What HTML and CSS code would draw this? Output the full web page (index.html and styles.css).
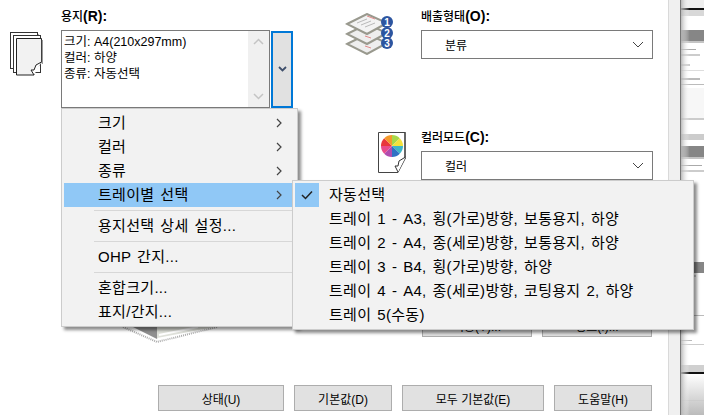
FILE: index.html
```html
<!DOCTYPE html>
<html lang="ko">
<head>
    <meta charset="UTF-8">
    <title>인쇄 설정 - 용지</title>
    <link rel="stylesheet" href="styles.css">
</head>
<body>
    <div class="page">
        <div class="sheet">
            <div class="columns">
                <div class="paper-col">
                    <svg class="paper-icon" width="33" height="44" viewBox="0 0 33 44">
                        <path d="M28 2V36" stroke="#aaa" stroke-width="2"/>
                        <rect x="0.5" y="0.5" width="27" height="36" fill="#fff" stroke="#333"/>
                        <rect x="3.5" y="3.500" width="27" height="37" fill="#fff" stroke="#333"/>
                        <path d="M6.5 6.5H31.500V30L24 40V43H6.500Z" fill="#f2f2f2" stroke="#222"/>
                        <path d="M31.500 30L26 33L24 38L21 38L24 43" fill="#fff" stroke="#222"/>
                        <path d="M32.500 8V32" stroke="#999" stroke-width="1.500"/>
                    </svg>
                    <div class="paper-field">
                        <div class="field-label">용지<b>(R):</b></div>
                        <div class="paper-row">
                            <div class="listbox">
                                <div class="listbox-text">
                                    <div>크기: A4(210x297mm)</div>
                                    <div>컬러: 하양</div>
                                    <div>종류: 자동선택</div>
                                </div>
                                <div class="scrollbar">
                                    <svg width="11" height="7" viewBox="0 0 11 7"><path d="M1 6L5.500 1.500L10 6" class="scroll-arrow"/></svg>
                                    <svg width="11" height="7" viewBox="0 0 11 7"><path d="M1 1L5.500 5.500L10 1" class="scroll-arrow"/></svg>
                                </div>
                            </div>
                            <button class="drop-btn">
                                <svg width="9" height="6" viewBox="0 0 9 6"><path d="M1 1L4.500 4.500L8 1" fill="none" stroke="#3f4f6b" stroke-width="1.800"/></svg>
                            </button>
                        </div>
                        <svg class="page-preview" width="100" height="75" viewBox="0 0 100 75">
                            <path d="M3 59L37 74L97 59" fill="none" stroke="#aaa" stroke-width="2" stroke-dasharray="1 1"/>
                            <path d="M13 59L37 71L40 59Z" fill="#8f8f8f"/>
                            <path d="M37 59H95L37 70Z" fill="#dfe1da"/>
                            <path d="M39 67L78 59" stroke="#fff" stroke-width="2"/>
                        </svg>
                    </div>
                </div>
                <div class="output-col">
                    <div class="setting">
                        <svg class="stack-icon" width="50" height="42" viewBox="0 0 50 42">
                            <path d="M2 31L22 21L42 30L22 41Z" fill="#eee" stroke="#99998e" stroke-width="2"/>
                            <path d="M2 21L22 11L42 20L22 31Z" fill="#eee" stroke="#99998e" stroke-width="2"/>
                            <path d="M2 11L22 1L42 10L22 21Z" fill="#f3f3f3" stroke="#99998e" stroke-width="2"/>
                            <path d="M12 10L22 6M16 12L26 8M20 14L30 10" stroke="#b9b9b9"/>
                            <path d="M22 3L30 6M20 23L26 25M20 33L26 35" stroke="#e08a8a"/>
                            <circle cx="42" cy="9" r="6" fill="#2c55a0"/>
                            <circle cx="42" cy="20" r="6" fill="#2c55a0"/>
                            <circle cx="42" cy="30" r="6" fill="#2c55a0"/>
                            <text x="42" y="12.500" class="stack-num">1</text>
                            <text x="42" y="23.500" class="stack-num">2</text>
                            <text x="42" y="33.500" class="stack-num">3</text>
                        </svg>
                        <div class="setting-field">
                            <div class="field-label">배출형태<b>(O):</b></div>
                            <div class="select">
                                <span>분류</span>
                                <svg width="12" height="7" viewBox="0 0 12 7"><path d="M1 1L6 6L11 1" fill="none" stroke="#444"/></svg>
                            </div>
                        </div>
                    </div>
                    <div class="setting setting-color">
                        <svg class="color-icon" width="29" height="41" viewBox="0 0 29 41">
                            <path d="M0.500 0.500H27.500V26L20 40.500H0.500Z" fill="#fff" stroke="#444"/>
                            <path d="M27 1V27" stroke="#666" stroke-width="2"/>
                            <path d="M27.500 25L21 29L20 34L17 34L20 40" fill="#fff" stroke="#333"/>
                            <path d="M14 14L14 3A11 11 0 0 1 21.800 6.200Z" fill="#a8d84a"/>
                            <path d="M14 14L21.800 6.200A11 11 0 0 1 25 14Z" fill="#f4e23c"/>
                            <path d="M14 14H25A11 11 0 0 1 21.800 21.800Z" fill="#3fb6c8"/>
                            <path d="M14 14L21.800 21.800A11 11 0 0 1 14 25Z" fill="#2f72c4"/>
                            <path d="M14 14V25A11 11 0 0 1 6.200 21.800Z" fill="#b04cb0"/>
                            <path d="M14 14L6.200 21.800A11 11 0 0 1 3 14Z" fill="#e84c8c"/>
                            <path d="M14 14H3A11 11 0 0 1 6.200 6.200Z" fill="#e8383c"/>
                            <path d="M14 14L6.200 6.200A11 11 0 0 1 14 3Z" fill="#f49a2c"/>
                        </svg>
                        <div class="setting-field">
                            <div class="field-label">컬러모드<b>(C):</b></div>
                            <div class="select">
                                <span>컬러</span>
                                <svg width="12" height="7" viewBox="0 0 12 7"><path d="M1 1L6 6L11 1" fill="none" stroke="#444"/></svg>
                            </div>
                        </div>
                    </div>
                    <div class="under-btns">
                        <button class="btn under-btn">기능(Y)...</button>
                        <button class="btn under-btn">정보(I)...</button>
                    </div>
                </div>
            </div>
            <div class="footer-btns">
                <button class="btn btn-status">상태(U)</button>
                <button class="btn btn-default">기본값(D)</button>
                <button class="btn btn-all">모두 기본값(E)</button>
                <button class="btn btn-default">도움말(H)</button>
            </div>
        </div>
        <div class="gutter"></div>
        <svg class="preview" width="24" height="415" viewBox="0 0 24 415">
            <defs>
                <linearGradient id="edge" x1="0" x2="1" y1="0" y2="0">
                    <stop offset="0" stop-color="#aaa"/>
                    <stop offset="0.4" stop-color="#fff" stop-opacity="0"/>
                </linearGradient>
                <linearGradient id="foot" x1="0" x2="0" y1="0" y2="1">
                    <stop offset="0" stop-color="#fff"/>
                    <stop offset="1" stop-color="#bbb"/>
                </linearGradient>
            </defs>
            <rect width="24" height="415" fill="#fff"/>
            <rect y="0" width="24" height="8" fill="#eee"/>
            <rect y="8" width="24" height="2" fill="#111"/>
            <rect y="10" width="24" height="6" fill="#d8d8d8"/>
            <rect y="30" width="24" height="11" fill="#868686"/>
            <rect y="41" width="24" height="2" fill="#c4c4c4"/>
            <rect y="49" width="16" height="1" fill="#aaa"/>
            <rect y="54" width="20" height="2" fill="#ccc"/>
            <rect y="64" width="10" height="2" fill="#ccc"/>
            <rect y="70" width="24" height="1" fill="#ddd"/>
            <rect y="78" width="20" height="2" fill="#bbb"/>
            <rect y="84" width="24" height="1" fill="#bbb"/>
            <rect y="88" width="24" height="30" fill="#f7f7f7"/>
            <rect y="118" width="24" height="2" fill="#ccc"/>
            <rect y="134" width="24" height="6" fill="#ccc"/>
            <rect y="146" width="24" height="11" fill="#868686"/>
            <rect y="157" width="24" height="2" fill="#c4c4c4"/>
            <rect y="165" width="22" height="1" fill="#aaa"/>
            <rect y="170" width="24" height="2" fill="#ccc"/>
            <rect y="262" width="24" height="11" fill="#868686"/>
            <rect y="275" width="16" height="2" fill="#ccc"/>
            <rect y="290" width="14" height="2" fill="#ccc"/>
            <rect y="315" width="24" height="1" fill="#bbb"/>
            <rect y="340" width="12" height="1" fill="#bbb"/>
            <rect y="344" width="24" height="1" fill="#ccc"/>
            <rect y="365" width="24" height="7" fill="#d0d0d0"/>
            <rect y="372" width="24" height="2" fill="#111"/>
            <rect y="374" width="24" height="41" fill="url(#foot)"/>
            <rect y="400" width="24" height="1" fill="#ccc"/>
            <rect width="24" height="415" fill="url(#edge)"/>
            <rect width="1" height="415" fill="#777"/>
        </svg>

        <div class="menu">
            <div class="menu-item">크기<svg class="menu-arrow" width="6" height="10" viewBox="0 0 6 10"><path d="M1 1L5 5L1 9"/></svg></div>
            <div class="menu-item">컬러<svg class="menu-arrow" width="6" height="10" viewBox="0 0 6 10"><path d="M1 1L5 5L1 9"/></svg></div>
            <div class="menu-item">종류<svg class="menu-arrow" width="6" height="10" viewBox="0 0 6 10"><path d="M1 1L5 5L1 9"/></svg></div>
            <div class="menu-item active">트레이별 선택<svg class="menu-arrow" width="6" height="10" viewBox="0 0 6 10"><path d="M1 1L5 5L1 9"/></svg></div>
            <div class="menu-sep"></div>
            <div class="menu-item">용지선택 상세 설정...</div>
            <div class="menu-sep"></div>
            <div class="menu-item">OHP 간지...</div>
            <div class="menu-sep"></div>
            <div class="menu-item">혼합크기...</div>
            <div class="menu-item">표지/간지...</div>
        </div>
        <div class="submenu">
            <div class="sub-item">
                <span class="check"><svg width="12" height="10" viewBox="0 0 12 10"><path d="M1 5L4.500 8.500L11 1.500" fill="none" stroke="#222" stroke-width="1.500"/></svg></span>
                자동선택
            </div>
            <div class="sub-item"><span class="check check-empty"></span>트레이 1 - A3, 횡(가로)방향, 보통용지, 하양</div>
            <div class="sub-item"><span class="check check-empty"></span>트레이 2 - A4, 종(세로)방향, 보통용지, 하양</div>
            <div class="sub-item"><span class="check check-empty"></span>트레이 3 - B4, 횡(가로)방향, 하양</div>
            <div class="sub-item"><span class="check check-empty"></span>트레이 4 - A4, 종(세로)방향, 코팅용지 2, 하양</div>
            <div class="sub-item"><span class="check check-empty"></span>트레이 5(수동)</div>
        </div>
    </div>
</body>
</html>
```

FILE: styles.css
```css
body {
    margin: 0;
    padding: 0;
    background: #fff;
    font-family: 'Liberation Sans', 'Noto Sans CJK KR', sans-serif;
    font-size: 12px;
    color: #000;
}
.page {
    position: relative;
    display: flex;
    width: 704px;
    height: 415px;
    overflow: hidden;
}
.sheet {
    display: flex;
    flex-direction: column;
    box-sizing: border-box;
    width: 668px;
    height: 415px;
    padding-top: 8px;
    background: #fff;
}
.gutter {
    box-sizing: border-box;
    width: 12px;
    background: #f0f0f0;
    border-left: 1px solid #d9d9d9;
}
.preview {
    display: block;
}
.columns {
    display: flex;
    flex: 1;
}
.paper-col {
    display: flex;
    width: 345px;
}
.paper-icon {
    flex: none;
    margin: 24px 18px 0 10px;
}
.paper-field {
    display: flex;
    flex-direction: column;
}
.field-label {
    height: 16px;
    line-height: 16px;
    margin-bottom: 6px;
    font-weight: 500;
}
.field-label b {
    font-size: 14px;
}
.paper-row {
    display: flex;
    align-items: center;
    gap: 1px;
}
.listbox {
    display: flex;
    box-sizing: border-box;
    width: 209px;
    height: 78px;
    border: 1px solid #7a7a7a;
}
.listbox-text {
    flex: 1;
    padding: 3px 0 0 2px;
    font-size: 12.5px;
    line-height: 16px;
}
.scrollbar {
    display: flex;
    flex-direction: column;
    justify-content: space-between;
    align-items: center;
    box-sizing: border-box;
    width: 21px;
    padding: 7px 0;
    background: #f0f0f0;
}
.scrollbar svg {
    display: block;
}
.scroll-arrow {
    fill: none;
    stroke: #c4c4c4;
    stroke-width: 1.5;
}
.drop-btn {
    display: flex;
    align-items: center;
    justify-content: center;
    box-sizing: border-box;
    width: 22px;
    height: 77px;
    padding: 0;
    background: #e1e1e1;
    border: 2px solid #0078d7;
}
.page-preview {
    display: block;
    flex: none;
    margin: 160px 0 0 59px;
}
.output-col {
    display: flex;
    flex-direction: column;
    width: 308px;
}
.setting {
    display: grid;
    grid-template-columns: 76px 232px;
}
.setting-color {
    margin-top: 70px;
}
.stack-icon {
    margin-top: 5px;
}
.color-icon {
    margin: 3px 0 0 33px;
}
.select {
    display: flex;
    align-items: center;
    justify-content: space-between;
    box-sizing: border-box;
    height: 29px;
    padding: 0 8px 0 23px;
    background: #fff;
    border: 1px solid #7a7a7a;
}
.under-btns {
    display: flex;
    gap: 10px;
    margin: 133px 0 0 77px;
}
.btn {
    box-sizing: border-box;
    height: 26px;
    padding: 0;
    background: #e1e1e1;
    border: 1px solid #adadad;
    font-family: inherit;
    font-size: 12px;
    color: #000;
}
.under-btn {
    width: 110px;
    height: 24px;
}
.footer-btns {
    display: flex;
    justify-content: flex-end;
    gap: 10px;
    padding: 0 16px 4px 0;
}
.btn-status {
    width: 126px;
}
.btn-default {
    width: 98px;
}
.btn-all {
    width: 142px;
}
.menu,
.submenu {
    position: absolute;
    box-sizing: border-box;
    padding: 2px;
    background: #f2f2f2;
    border: 1px solid #ccc;
    box-shadow: 3px 3px 3px rgba(0,0,0,0.45);
    font-size: 15px;
    letter-spacing: 0.3px;
    word-spacing: 1.5px;
}
.menu {
    left: 61px;
    top: 108px;
    width: 237px;
}
.submenu {
    left: 292px;
    top: 180px;
    width: 402px;
}
.menu-item {
    display: flex;
    align-items: center;
    justify-content: space-between;
    height: 24px;
    line-height: 24px;
    padding: 0 13px 0 34px;
}
.menu-item.active {
    background: #90c8f6;
}
.menu-arrow {
    flex: none;
    fill: none;
    stroke: #444;
    stroke-width: 1.2;
}
.menu-sep {
    height: 1px;
    margin: 3px 0 3px 30px;
    background: #d7d7d7;
}
.sub-item {
    display: flex;
    align-items: center;
    height: 24px;
    line-height: 24px;
}
.check {
    display: flex;
    align-items: center;
    justify-content: center;
    flex: none;
    width: 24px;
    height: 24px;
    margin-right: 10px;
    background: #90c8f6;
}
.check-empty {
    background: none;
}
.stack-num {
    fill: #fff;
    font-size: 10px;
    font-weight: bold;
    text-anchor: middle;
}
```
